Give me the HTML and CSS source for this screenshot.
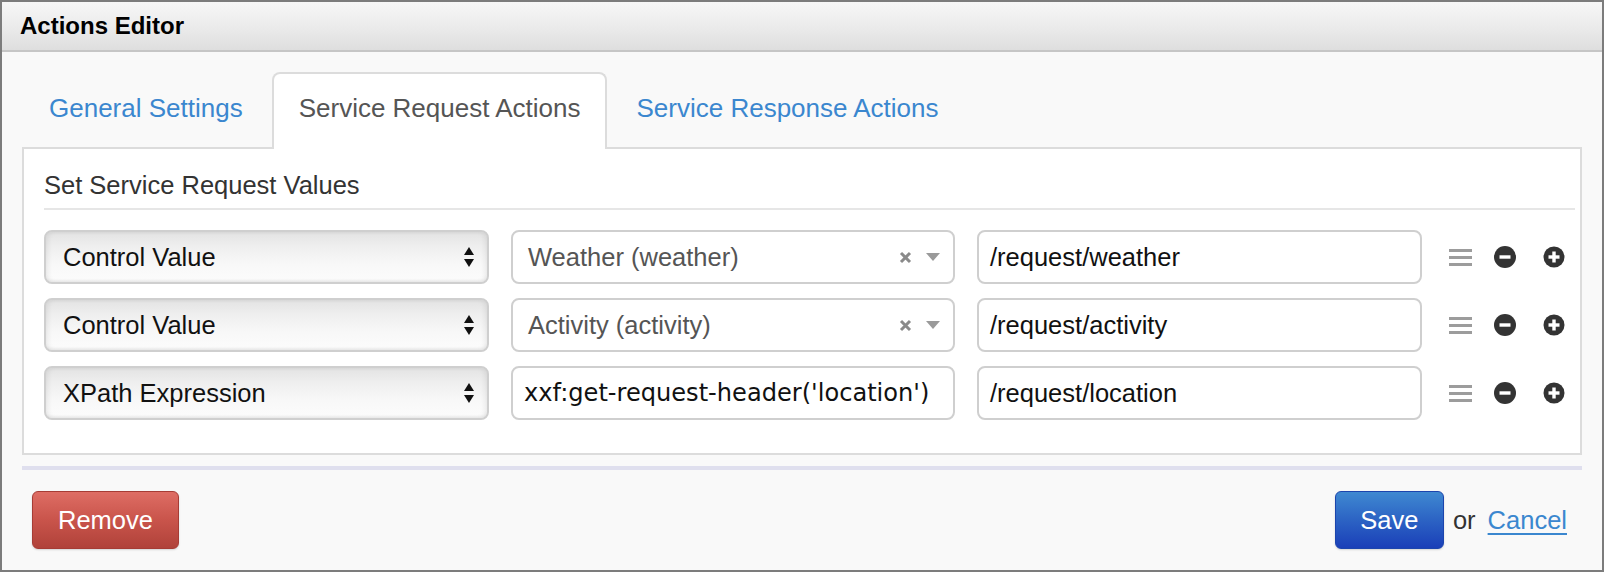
FILE: index.html
```html
<!DOCTYPE html>
<html>
<head>
<meta charset="utf-8">
<title>Actions Editor</title>
<link rel="stylesheet" href="styles.css">
</head>
<body>
<div class="dialog">
  <div class="dialog-header">Actions Editor</div>
  <div class="dialog-body">
    <ul class="tabs">
      <li class="tab"><a>General Settings</a></li>
      <li class="tab active"><a>Service Request Actions</a></li>
      <li class="tab"><a>Service Response Actions</a></li>
    </ul>
    <div class="panel">
      <div class="legend">Set Service Request Values</div>
      <div class="rows">
        <div class="row">
          <div class="select"><span>Control Value</span>
            <svg class="sel-arrows" width="10" height="21" viewBox="0 0 10 21"><polygon points="0,8 5,0 10,8"/><polygon points="0,12 10,12 5,20"/></svg>
          </div>
          <div class="combo"><span>Weather (weather)</span>
            <span class="combo-icons">
              <svg width="13" height="13" viewBox="0 0 13 13"><path d="M2 2L11 11M11 2L2 11"/></svg>
              <svg width="14" height="8" viewBox="0 0 14 8"><polygon points="0,0 14,0 7,8"/></svg>
            </span>
          </div>
          <div class="input">/request/weather</div>
          <div class="row-icons">
            <svg class="ic-menu" width="23" height="17" viewBox="0 0 23 17"><rect x="0" y="0" width="23" height="3"/><rect x="0" y="7" width="23" height="3"/><rect x="0" y="14" width="23" height="3"/></svg>
            <svg class="ic-minus" width="22" height="22" viewBox="0 0 22 22"><circle cx="11" cy="11" r="11"/><rect x="5.5" y="9.3" width="11" height="3.4" fill="#fff"/></svg>
            <svg class="ic-plus" width="22" height="22" viewBox="0 0 22 22"><circle cx="11" cy="11" r="10.5"/><rect x="5.5" y="9.3" width="11" height="3.4" fill="#fff"/><rect x="9.3" y="5.5" width="3.4" height="11" fill="#fff"/></svg>
          </div>
        </div>
        <div class="row">
          <div class="select"><span>Control Value</span>
            <svg class="sel-arrows" width="10" height="21" viewBox="0 0 10 21"><polygon points="0,8 5,0 10,8"/><polygon points="0,12 10,12 5,20"/></svg>
          </div>
          <div class="combo"><span>Activity (activity)</span>
            <span class="combo-icons">
              <svg width="13" height="13" viewBox="0 0 13 13"><path d="M2 2L11 11M11 2L2 11"/></svg>
              <svg width="14" height="8" viewBox="0 0 14 8"><polygon points="0,0 14,0 7,8"/></svg>
            </span>
          </div>
          <div class="input">/request/activity</div>
          <div class="row-icons">
            <svg class="ic-menu" width="23" height="17" viewBox="0 0 23 17"><rect x="0" y="0" width="23" height="3"/><rect x="0" y="7" width="23" height="3"/><rect x="0" y="14" width="23" height="3"/></svg>
            <svg class="ic-minus" width="22" height="22" viewBox="0 0 22 22"><circle cx="11" cy="11" r="11"/><rect x="5.5" y="9.3" width="11" height="3.4" fill="#fff"/></svg>
            <svg class="ic-plus" width="22" height="22" viewBox="0 0 22 22"><circle cx="11" cy="11" r="10.5"/><rect x="5.5" y="9.3" width="11" height="3.4" fill="#fff"/><rect x="9.3" y="5.5" width="3.4" height="11" fill="#fff"/></svg>
          </div>
        </div>
        <div class="row">
          <div class="select"><span>XPath Expression</span>
            <svg class="sel-arrows" width="10" height="21" viewBox="0 0 10 21"><polygon points="0,8 5,0 10,8"/><polygon points="0,12 10,12 5,20"/></svg>
          </div>
          <div class="input input-expr">xxf:get-request-header('location')</div>
          <div class="input">/request/location</div>
          <div class="row-icons">
            <svg class="ic-menu" width="23" height="17" viewBox="0 0 23 17"><rect x="0" y="0" width="23" height="3"/><rect x="0" y="7" width="23" height="3"/><rect x="0" y="14" width="23" height="3"/></svg>
            <svg class="ic-minus" width="22" height="22" viewBox="0 0 22 22"><circle cx="11" cy="11" r="11"/><rect x="5.5" y="9.3" width="11" height="3.4" fill="#fff"/></svg>
            <svg class="ic-plus" width="22" height="22" viewBox="0 0 22 22"><circle cx="11" cy="11" r="10.5"/><rect x="5.5" y="9.3" width="11" height="3.4" fill="#fff"/><rect x="9.3" y="5.5" width="3.4" height="11" fill="#fff"/></svg>
          </div>
        </div>
      </div>
    </div>
    <div class="divider"></div>
    <div class="footer">
      <button class="btn btn-danger">Remove</button>
      <div class="footer-right">
        <button class="btn btn-primary">Save</button>
        <span class="or">or</span>
        <a class="cancel">Cancel</a>
      </div>
    </div>
  </div>
</div>
</body>
</html>
```

FILE: styles.css
```css
html, body {
  margin: 0;
  padding: 0;
  background: #f9f9f9;
}

body {
  font-family: "Liberation Sans", Arial, sans-serif;
  font-size: 25.5px;
  color: #333;
}

.dialog {
  width: 1604px;
  height: 572px;
  box-sizing: border-box;
  border: 2px solid #7c7c7c;
  background: #f9f9f9;
  display: flex;
  flex-direction: column;
}

.dialog-header {
  height: 48px;
  line-height: 48px;
  padding-left: 18px;
  font-size: 24px;
  font-weight: bold;
  color: #000;
  background: linear-gradient(to bottom, #f7f7f7 0%, #e9e9e9 60%, #dedede 100%);
  border-bottom: 2px solid #c6c6c6;
}

.dialog-body {
  padding: 0 20px;
}

/* Tabs */
.tabs {
  list-style: none;
  margin: 20px 0 0;
  padding: 0;
  display: flex;
  position: relative;
  z-index: 1;
}

.tab {
  margin-right: 2px;
  margin-bottom: -2px;
}

.tab a {
  display: block;
  box-sizing: border-box;
  height: 77px;
  padding: 0 25px 6px;
  line-height: 69px;
  font-size: 26px;
  border: 2px solid transparent;
  border-bottom: 0;
  border-radius: 8px 8px 0 0;
  color: #3b87cf;
}

.tab.active a {
  background: #fff;
  border-color: #dcdcdc;
  color: #555;
}

/* Panel */
.panel {
  background: #fff;
  border: 2px solid #dcdcdc;
  padding: 21px 5px 33px 20px;
}

.legend {
  line-height: 30px;
  padding-bottom: 8px;
  border-bottom: 2px solid #e6e6e6;
  color: #333;
}

.rows {
  margin-top: 20px;
  display: flex;
  flex-direction: column;
  gap: 14px;
}

.row {
  display: grid;
  grid-template-columns: 445px 444px 445px auto;
  column-gap: 22px;
  height: 54px;
}

.select,
.combo,
.input {
  box-sizing: border-box;
  height: 54px;
  border: 2px solid #cfcfcf;
  border-radius: 8px;
  display: flex;
  align-items: center;
  white-space: nowrap;
  overflow: hidden;
}

.select {
  padding: 0 13px 0 17px;
  justify-content: space-between;
  color: #111;
  background: linear-gradient(to bottom, #e3e3e3 0%, #efefef 30%, #f8f8f8 65%, #fcfcfc 100%);
  box-shadow: inset 3px 0 4px rgba(0,0,0,0.05), inset -3px 0 4px rgba(0,0,0,0.05), inset 0 -2px 3px rgba(0,0,0,0.04);
}

.sel-arrows {
  fill: #111;
  display: block;
}

.combo {
  padding: 0 13px 0 15px;
  justify-content: space-between;
  background: #fff;
  color: #555;
}

.combo-icons {
  display: flex;
  align-items: center;
  gap: 14px;
}

.combo-icons svg {
  display: block;
}

.combo-icons path {
  stroke: #8a8a8a;
  stroke-width: 3;
  fill: none;
}

.combo-icons polygon {
  fill: #9a9a9a;
}

.input {
  padding: 0 11px;
  background: #fff;
  color: #111;
}

.input-expr {
  font-family: "DejaVu Sans", "Liberation Sans", sans-serif;
  font-size: 24.1px;
}

.row-icons {
  display: flex;
  align-items: center;
  padding-left: 5px;
}

.row-icons svg {
  display: block;
}

.ic-menu {
  fill: #9c9c9c;
  margin-right: 22px;
}

.ic-minus {
  fill: #333;
  margin-right: 27px;
}

.ic-plus {
  fill: #333;
}

/* Footer */
.divider {
  height: 4px;
  background: #dfdfee;
  margin-top: 11px;
}

.footer {
  display: flex;
  justify-content: space-between;
  align-items: center;
  padding: 21px 15px 0 10px;
}

.footer-right {
  display: flex;
  align-items: center;
}

.btn {
  box-sizing: border-box;
  height: 58px;
  border-radius: 6px;
  font-family: "Liberation Sans", Arial, sans-serif;
  font-size: 25.5px;
  color: #fff;
  padding: 0;
  cursor: pointer;
}

.btn-danger {
  width: 147px;
  background: linear-gradient(to bottom, #de6d64 0%, #c9544b 50%, #b0423a 100%);
  border: 1px solid #a63c35;
  box-shadow: 0 1px 2px rgba(0,0,0,0.15);
}

.btn-primary {
  width: 109px;
  background: linear-gradient(to bottom, #3f89d1 0%, #2c63c4 50%, #1a3fb8 100%);
  border: 1px solid #1c45ad;
  box-shadow: 0 1px 2px rgba(0,0,0,0.15);
}

.or {
  margin-left: 9px;
  color: #333;
}

.cancel {
  margin-left: 12px;
  color: #3b87cf;
  text-decoration: underline;
  text-underline-offset: 4px;
}
```
